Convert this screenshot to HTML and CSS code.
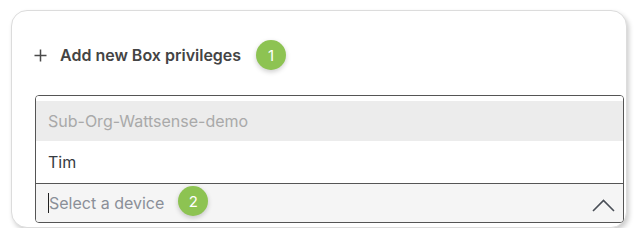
FILE: index.html
```html
<!DOCTYPE html>
<html>
<head>
<meta charset="utf-8">
<link rel="stylesheet" href="styles.css">
</head>
<body>
<div class="card">
  <div class="header">
    <svg class="plus" width="13" height="13" viewBox="0 0 13 13"><path d="M6.5 0.5v12M0.5 6.5h12" stroke="#4a4a4a" stroke-width="1.5" fill="none"/></svg>
    <span class="title">Add new Box privileges</span>
    <span class="badge badge-title">1</span>
  </div>
  <div class="select">
    <div class="menu">
      <div class="option disabled">Sub-Org-Wattsense-demo</div>
      <div class="option">Tim</div>
    </div>
    <div class="control">
      <span class="caret"></span>
      <span class="placeholder">Select a device</span>
      <span class="badge badge-input">2</span>
      <svg class="chevron" width="23" height="13" viewBox="0 0 23 13"><path d="M1 12L11.5 1.5L22 12" stroke="#4a4f57" stroke-width="1.6" fill="none"/></svg>
    </div>
  </div>
</div>
</body>
</html>
```
FILE: styles.css
```css
html, body {
  margin: 0;
  padding: 0;
  background: #ffffff;
}
body {
  font-family: Inter, "Liberation Sans", sans-serif;
}
.card {
  box-sizing: border-box;
  margin: 10px 0 0 11px;
  width: 616px;
  height: 218px;
  border: 1px solid #dcdcdc;
  border-radius: 16px;
  box-shadow: 2px 3px 5px rgba(0, 0, 0, 0.2);
  padding: 29px 2px 0 22px;
  background: #fff;
}
.header {
  display: flex;
  align-items: center;
  height: 30px;
}
.plus {
  margin-top: 1px;
}
.title {
  margin-left: 13px;
  font-size: 16px;
  font-weight: 600;
  color: #444;
}
.badge {
  display: inline-flex;
  align-items: center;
  justify-content: center;
  width: 30px;
  height: 30px;
  border-radius: 50%;
  background: #8dc352;
  color: #fff;
  font-size: 15px;
  box-shadow: 0 2px 5px rgba(0, 0, 0, 0.2);
}
.badge-title {
  margin-left: 15px;
}
.select {
  margin-top: 25px;
  margin-left: 1px;
  border: 1px solid #555;
  border-radius: 4px;
  overflow: hidden;
  font-size: 16px;
}
.menu {
  padding-top: 5px;
  background: #fff;
}
.option {
  display: flex;
  align-items: center;
  height: 42px;
  padding-left: 12px;
  color: #363b42;
}
.option.disabled {
  height: 40px;
  background: #ececec;
  color: #a9a9a9;
}
.control {
  display: flex;
  align-items: center;
  height: 38px;
  border-top: 1px solid #555;
  background: #f5f5f5;
  padding: 0 8px 0 12px;
}
.caret {
  width: 1px;
  height: 20px;
  background: #222;
}
.placeholder {
  color: #8a8f98;
}
.badge-input {
  margin-left: 14px;
  margin-top: -4px;
}
.chevron {
  margin-left: auto;
  margin-top: 4px;
}
```
